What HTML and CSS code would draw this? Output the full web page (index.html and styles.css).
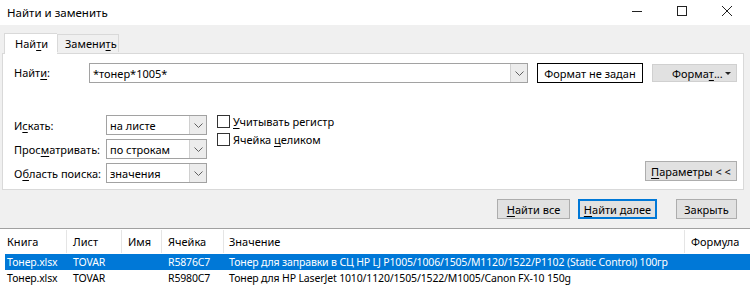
FILE: index.html
```html
<!DOCTYPE html>
<html lang="ru">
<head>
  <meta charset="UTF-8" />
  <title>Найти и заменить</title>
  <link rel="stylesheet" href="styles.css">
</head>
<body>
  <div class="titlebar">
    <span class="title">Найти и заменить</span>
    <div class="controls">
      <span class="ctl ctl-min"><svg width="10" height="10" viewBox="0 0 10 10"><path d="M0 5.5h10" stroke="#222" stroke-width="1"/></svg></span>
      <span class="ctl ctl-max"><svg width="10" height="10" viewBox="0 0 10 10"><rect x="0.5" y="0.5" width="9" height="9" fill="none" stroke="#222" stroke-width="1"/></svg></span>
      <span class="ctl ctl-close"><svg width="10" height="10" viewBox="0 0 10 10"><path d="M0 0L10 10M10 0L0 10" stroke="#222" stroke-width="1"/></svg></span>
    </div>
  </div>

  <div class="dialog">
    <div class="tabs">
      <div class="tab active">Най<u>т</u>и</div>
      <div class="tab">Замени<u>т</u>ь</div>
    </div>

    <div class="panel">
      <div class="find-row">
        <label class="find-label">Найт<u>и</u>:</label>
        <div class="combo">
          <span class="combo-text">*тонер*1005*</span>
          <span class="combo-arrow"><svg width="9" height="5" viewBox="0 0 9 5"><path d="M0.5 0.5L4.5 4.5L8.5 0.5" fill="none" stroke="#606060"/></svg></span>
        </div>
        <button class="btn btn-preview">Формат не задан</button>
        <button class="btn btn-format">Форма<u>т</u>... <span class="caret"></span></button>
      </div>

      <div class="options">
        <div class="selects">
          <div class="opt-row">
            <span class="opt-label">И<u>с</u>кать:</span>
            <div class="select"><span>на листе</span><span class="select-arrow"><svg width="9" height="5" viewBox="0 0 9 5"><path d="M0.5 0.5L4.5 4.5L8.5 0.5" fill="none" stroke="#606060"/></svg></span></div>
          </div>
          <div class="opt-row">
            <span class="opt-label">Прос<u>м</u>атривать:</span>
            <div class="select"><span>по строкам</span><span class="select-arrow"><svg width="9" height="5" viewBox="0 0 9 5"><path d="M0.5 0.5L4.5 4.5L8.5 0.5" fill="none" stroke="#606060"/></svg></span></div>
          </div>
          <div class="opt-row">
            <span class="opt-label">О<u>б</u>ласть поиска:</span>
            <div class="select"><span>значения</span><span class="select-arrow"><svg width="9" height="5" viewBox="0 0 9 5"><path d="M0.5 0.5L4.5 4.5L8.5 0.5" fill="none" stroke="#606060"/></svg></span></div>
          </div>
        </div>

        <div class="checks">
          <div class="check-row"><span class="checkbox"></span><span><u>У</u>читывать регистр</span></div>
          <div class="check-row"><span class="checkbox"></span><span>Ячейка <u>ц</u>еликом</span></div>
        </div>

        <button class="btn btn-params"><u>П</u>араметры &lt; &lt;</button>
      </div>
    </div>

    <div class="actions">
      <button class="btn btn-all"><u>Н</u>айти все</button>
      <button class="btn btn-next"><u>Н</u>айти далее</button>
      <button class="btn btn-close">Закрыть</button>
    </div>
  </div>

  <div class="results">
    <div class="res-head">
      <span class="c-book">Книга</span>
      <span class="c-sheet">Лист</span>
      <span class="c-name">Имя</span>
      <span class="c-cell">Ячейка</span>
      <span class="c-value">Значение</span>
      <span class="c-formula">Формула</span>
    </div>
    <div class="res-row selected">
      <span class="c-book">Тонер.xlsx</span>
      <span class="c-sheet">TOVAR</span>
      <span class="c-name"></span>
      <span class="c-cell">R5876C7</span>
      <span class="c-value">Тонер для заправки в СЦ HP LJ P1005/1006/1505/M1120/1522/P1102 (Static Control) 100гр</span>
      <span class="c-formula"></span>
    </div>
    <div class="res-row">
      <span class="c-book">Тонер.xlsx</span>
      <span class="c-sheet">TOVAR</span>
      <span class="c-name"></span>
      <span class="c-cell">R5980C7</span>
      <span class="c-value">Тонер для HP LaserJet 1010/1120/1505/1522/M1005/Canon FX-10 150g</span>
      <span class="c-formula"></span>
    </div>
  </div>
</body>
</html>
```

FILE: styles.css
```css
body {
  margin: 0;
  width: 750px;
  height: 293px;
  overflow: hidden;
  background: #fff;
  font-family: 'Noto Sans', 'Open Sans', Arial, sans-serif;
  font-size: 11px;
  color: #000;
}

u {
  text-decoration-thickness: 1px;
  text-underline-offset: 2px;
}

/* title bar */
.titlebar {
  height: 25px;
  display: flex;
  align-items: center;
  background: #fff;
}

.title {
  padding-left: 7px;
  font-size: 11.5px;
  margin-top: -1px;
}

.controls {
  margin-left: auto;
  display: flex;
  height: 100%;
}

.ctl {
  width: 45px;
  display: flex;
  align-items: center;
  justify-content: center;
  margin-top: -4px;
}

.ctl-close { width: 46px; }

/* dialog body */
.dialog {
  background: #f0f0f0;
  padding-top: 7px;
  height: 204px;
  box-sizing: border-box;
  border-bottom: 1px solid #a0a0a0;
}

.tabs {
  display: flex;
  align-items: flex-end;
  padding-left: 4px;
  height: 21px;
  position: relative;
  z-index: 1;
}

.tab {
  width: 62px;
  height: 18px;
  padding-left: 7px;
  display: flex;
  align-items: center;
  border: 1px solid #d9d9d9;
  border-bottom: none;
  background: #f0f0f0;
  box-sizing: border-box;
  margin-bottom: 1px;
}

.tab.active {
  width: 53px;
  height: 21px;
  padding-left: 10px;
  background: #fff;
  margin-bottom: -1px;
  border-right: none;
  padding-bottom: 2px;
}

.panel {
  margin: 0 6px 0 2px;
  background: #fff;
  border: 1px solid #d9d9d9;
  height: 137px;
  box-sizing: border-box;
  padding: 9px 6px 0 11px;
}

.find-row {
  display: flex;
  align-items: flex-start;
}

.find-label {
  width: 75px;
  line-height: 20px;
}

.combo {
  width: 439px;
  height: 20px;
  box-sizing: border-box;
  border: 1px solid #a2a2a2;
  display: flex;
  align-items: center;
}

.combo-text {
  flex: 1;
  padding-left: 3px;
}

.combo-arrow, .select-arrow {
  width: 16px;
  height: 18px;
  display: flex;
  align-items: center;
  justify-content: center;
  background: #ececec;
  border-left: 1px solid #d0d0d0;
}

.btn {
  font-family: inherit;
  font-size: 11px;
  color: #000;
  background: #e1e1e1;
  border: 1px solid #adadad;
  padding: 0;
  height: 20px;
  box-sizing: border-box;
  display: flex;
  align-items: center;
  justify-content: center;
  white-space: nowrap;
}

.btn-preview {
  width: 106px;
  margin-left: 9px;
  background: #fff;
  border: 1px solid #000;
}

.btn-format {
  width: 85px;
  height: 18px;
  margin-top: 1px;
  margin-left: 9px;
  border-color: #d0d0d0;
  padding: 0 5px 0 19px;
  justify-content: flex-start;
}

.caret {
  margin-left: auto;
  width: 0;
  height: 0;
  border-left: 3px solid transparent;
  border-right: 3px solid transparent;
  border-top: 3px solid #222;
}

.options {
  display: flex;
  margin-top: 32px;
}

.selects {
  display: flex;
  flex-direction: column;
  gap: 4px;
}

.opt-row {
  display: flex;
  align-items: center;
}

.opt-label {
  width: 92px;
  white-space: nowrap;
}

.select {
  width: 101px;
  height: 20px;
  box-sizing: border-box;
  border: 1px solid #a2a2a2;
  display: flex;
  align-items: center;
  justify-content: space-between;
  padding-left: 3px;
}

.checks {
  margin-left: 10px;
  margin-top: -3px;
  display: flex;
  flex-direction: column;
}

.check-row {
  display: flex;
  align-items: center;
  height: 18px;
  gap: 3px;
  white-space: nowrap;
}

.checkbox {
  width: 13px;
  height: 13px;
  box-sizing: border-box;
  border: 1px solid #333;
  background: #fff;
}

.btn-params {
  margin-left: auto;
  align-self: flex-end;
  margin-bottom: 2px;
  width: 92px;
}

.actions {
  display: flex;
  justify-content: flex-end;
  padding: 9px 13px 0 0;
}

.btn-all { width: 73px; }

.btn-next {
  width: 79px;
  margin-left: 8px;
  border: 2px solid #0078d7;
}

.btn-close {
  width: 61px;
  margin-left: 19px;
}

/* results list */
.results {
  background: #fff;
}

.res-head, .res-row {
  display: flex;
  white-space: nowrap;
}

.res-head {
  height: 25px;
  align-items: center;
}

.res-head span {
  border-right: 1px solid #e5e5e5;
  height: 23px;
  line-height: 23px;
}

.res-head span:last-child { border-right: none; }

.res-row {
  height: 16px;
  line-height: 16px;
  margin-left: 5px;
  font-size: 10.5px;
  letter-spacing: -0.15px;
}

.res-row span { overflow: hidden; }

.res-row.selected {
  background: #0078d7;
  color: #fff;
}

.c-book { width: 67px; padding-left: 7px; box-sizing: border-box; }
.c-sheet { width: 55px; padding-left: 6px; box-sizing: border-box; }
.c-name { width: 40px; padding-left: 6px; box-sizing: border-box; }
.c-cell { width: 62px; padding-left: 6px; box-sizing: border-box; }
.c-value { width: 461px; padding-left: 5px; box-sizing: border-box; }
.c-formula { flex: 1; padding-left: 6px; box-sizing: border-box; }

.res-row .c-book { width: 62px; padding-left: 2px; }
```
